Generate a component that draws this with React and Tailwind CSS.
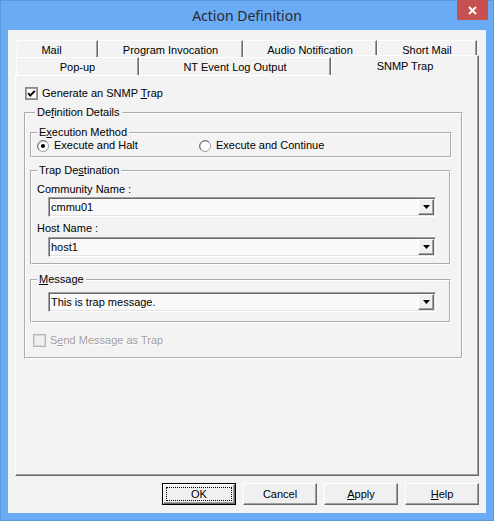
import React from 'react';

const raised =
  'border border-t-white border-l-white border-r-[#696969] border-b-[#696969] shadow-[inset_-1px_-1px_0_#a0a0a0]';
const sunken =
  'border border-t-[#a0a0a0] border-l-[#a0a0a0] border-r-white border-b-white shadow-[inset_1px_1px_0_#696969,inset_-1px_-1px_0_#e3e3e3]';

function Tab({ width, className = '', children }) {
  return (
    <div
      className={`${width} h-full flex items-center justify-center border-t border-l border-r border-t-white border-l-white border-r-[#696969] shadow-[inset_-1px_0_0_#a0a0a0] pt-[2px] ${className}`}
    >
      {children}
    </div>
  );
}

function CheckBox({ checked, disabled }) {
  return (
    <svg width="13" height="13" viewBox="0 0 13 13" className="shrink-0">
      <rect x="0.5" y="0.5" width="12" height="12" fill={disabled ? '#f0f0f0' : '#ffffff'} stroke={disabled ? '#b8b8b8' : '#8a8a8a'} />
      <rect x="1.5" y="1.5" width="10" height="10" fill="none" stroke={disabled ? '#d8d8d8' : '#5a5a5a'} strokeOpacity={disabled ? 1 : 0.6} />
      {checked && <polyline points="3.2,6.2 5.2,8.6 9.8,3.8" fill="none" stroke="#000" strokeWidth="1.9" />}
    </svg>
  );
}

function Radio({ checked }) {
  return (
    <svg width="12" height="12" viewBox="0 0 12 12" className="shrink-0">
      <circle cx="6" cy="6" r="5.5" fill="#ffffff" stroke="#a0a0a0" />
      <path d="M2.2 9.8 A5.4 5.4 0 0 1 9.8 2.2" fill="none" stroke="#6a6a6a" />
      {checked && <circle cx="6" cy="6" r="2" fill="#000" />}
    </svg>
  );
}

function Combo({ value }) {
  return (
    <div className={`${sunken} ml-[16px] w-[388px] h-[20px] bg-[#f9f9f9] flex items-center p-[1px] pl-[2px]`}>
      <span className="flex-1 leading-[13px]">{value}</span>
      <div className={`${raised} w-[16px] h-[16px] bg-[#f0f0f0] flex items-center justify-center`}>
        <svg width="7" height="4" viewBox="0 0 7 4">
          <polygon points="0,0 7,0 3.5,4" fill="#000" />
        </svg>
      </div>
    </div>
  );
}

function Group({ title, className = '', children }) {
  return (
    <fieldset className={`border-2 border-white [border-style:groove] ${className}`}>
      <legend className="ml-[5px] px-[2px] leading-[13px]">{title}</legend>
      {children}
    </fieldset>
  );
}

function Button({ children, isDefault }) {
  if (isDefault) {
    return (
      <div className="w-[74px] h-[22px] border border-black">
        <div className={`${raised} h-full bg-[#f0f0f0] p-[2px]`}>
          <div className="h-full border border-dotted border-black flex items-center justify-center">{children}</div>
        </div>
      </div>
    );
  }
  return (
    <div className={`${raised} w-[74px] h-[22px] bg-[#f0f0f0] flex items-center justify-center`}>{children}</div>
  );
}

export default function App() {
  return (
    <div className="w-[494px] h-[521px] bg-[#69abf5] border border-[#5b98db] flex flex-col font-['Liberation_Sans',Arial,sans-serif] text-[11px] text-black">
      {/* Title bar */}
      <div className="relative h-[29px] shrink-0 flex items-center justify-center">
        <span className="font-['Noto_Sans',sans-serif] text-[14px] text-[#2a2a2a] -mt-[1px]">Action Definition</span>
        <div className="absolute right-[5px] top-[-1px] w-[31px] h-[20px] bg-[#c75050] flex items-center justify-center">
          <svg width="9" height="9" viewBox="0 0 9 9">
            <path d="M1 1 L8 8 M8 1 L1 8" stroke="#fff" strokeWidth="2" />
          </svg>
        </div>
      </div>

      {/* Client area */}
      <div className="flex-1 mx-[7px] mb-[7px] bg-[#f3f3f3] pt-[10px] pl-[7px] flex flex-col">
        {/* Tab row 1 */}
        <div className="flex h-[17px] pl-[2px]">
          <Tab width="w-[81px]" className="pr-[12px]">Mail</Tab>
          <Tab width="w-[145px]">Program Invocation</Tab>
          <Tab width="w-[134px]">Audio Notification</Tab>
          <Tab width="w-[100px]">Short Mail</Tab>
        </div>
        {/* Tab row 2 */}
        <div className="flex h-[18px] pl-[1px] items-start">
          <Tab width="w-[123px]">Pop-up</Tab>
          <Tab width="w-[192px]">NT Event Log Output</Tab>
          <div className="relative z-10 w-[148px] h-[21px] -mt-[2px] bg-[#f3f3f3] flex justify-center pt-[2px] border-t border-l border-r border-t-white border-l-white border-r-[#696969] shadow-[inset_-1px_0_0_#a0a0a0]">
            SNMP Trap
          </div>
        </div>

        {/* Panel */}
        <div className={`${raised} w-[464px] h-[401px] pl-[8px] pt-[11px] flex flex-col`}>
          <div className="flex items-center gap-[4px] ml-[1px] h-[13px]">
            <CheckBox checked />
            <span className="leading-[13px]">
              Generate an SNMP <u>T</u>rap
            </span>
          </div>

          <Group
            title={<>De<u>f</u>inition Details</>}
            className="w-[439px] mt-[6px] pl-[4px] pb-[10px]"
          >
            <Group title={<>E<u>x</u>ecution Method</>} className="w-[422px] mt-[7px] pb-[4px]">
              <div className="flex items-center h-[13px] pl-[5px]">
                <div className="w-[162px] flex items-center gap-[5px]">
                  <Radio checked />
                  <span>Execute and Halt</span>
                </div>
                <div className="flex items-center gap-[5px]">
                  <Radio />
                  <span>Execute and Continue</span>
                </div>
              </div>
            </Group>

            <Group title={<>Trap De<u>s</u>tination</>} className="w-[421px] mt-[6px] pb-[6px]">
              <div className="pl-[5px] mt-[6px] leading-[13px]">Community Name :</div>
              <div className="mt-[1px]">
                <Combo value="cmmu01" />
              </div>
              <div className="pl-[5px] mt-[5px] leading-[13px]">Host Name :</div>
              <div className="mt-[2px]">
                <Combo value="host1" />
              </div>
            </Group>

            <Group title={<><u>M</u>essage</>} className="w-[421px] mt-[8px] pb-[9px]">
              <div className="mt-[6px]">
                <Combo value="This is trap message." />
              </div>
            </Group>

            <div className="flex items-center gap-[4px] mt-[11px] ml-[3px] h-[13px] text-[#a0a0a0] [text-shadow:1px_1px_0_#fff]">
              <CheckBox disabled />
              <span className="leading-[13px]">
                S<u>e</u>nd Message as Trap
              </span>
            </div>
          </Group>
        </div>

        {/* Buttons */}
        <div className="flex gap-[7px] mt-[7px] pl-[147px]">
          <Button isDefault>OK</Button>
          <Button>Cancel</Button>
          <Button>
            <span>
              <u>A</u>pply
            </span>
          </Button>
          <Button>
            <span>
              <u>H</u>elp
            </span>
          </Button>
        </div>
      </div>
    </div>
  );
}
